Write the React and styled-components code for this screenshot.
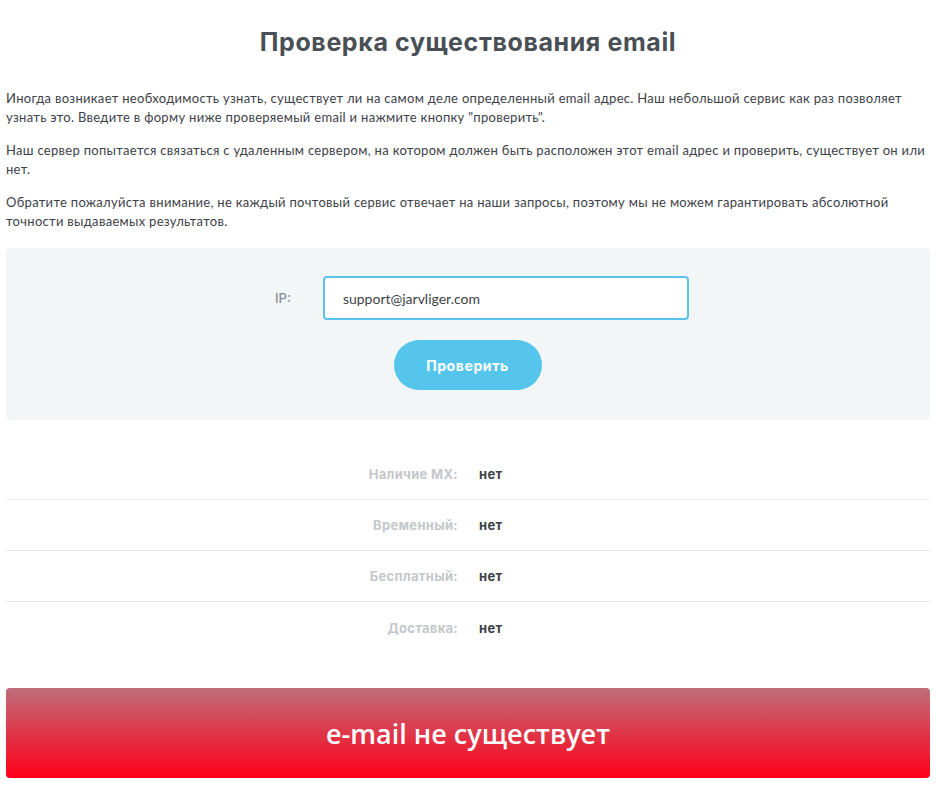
import React from "react";
import styled, { createGlobalStyle } from "styled-components";

const Global = createGlobalStyle`
  html, body { margin: 0; padding: 0; background: #fff; }
  body { font-family: Lato, "Noto Sans", sans-serif; color: #3d4148; }
  * { box-sizing: border-box; }
`;

const Page = styled.div`
  padding: 0 6px 12px 6px;
  width: 936px;
`;

const Title = styled.h1`
  margin: 0;
  padding-top: 26px;
  height: 80px;
  text-align: center;
  font-family: Inter, "Noto Sans", sans-serif;
  font-weight: 700;
  font-size: 25px;
  letter-spacing: 0.6px;
  line-height: 32px;
  color: #4a4f55;
`;

const Text = styled.p`
  margin: 0 0 14px 0;
  font-size: 13px;
  line-height: 19px;
  letter-spacing: 0.3px;
  color: #3d4148;
`;

const Intro = styled.div`
  padding-top: 9px;
  padding-bottom: 2px;
`;

const FormPanel = styled.form`
  margin-top: 1px;
  background: #f3f6f7;
  border-radius: 4px;
  padding: 28px 0 30px;
  display: flex;
  flex-direction: column;
  align-items: center;
  gap: 20px;
`;

const FieldRow = styled.div`
  display: flex;
  align-items: center;
  gap: 32px;
  margin-left: 28px;
`;

const Label = styled.label`
  font-family: Inter, sans-serif;
  font-size: 13px;
  font-weight: 500;
  color: #8a8f95;
`;

const Input = styled.input`
  width: 366px;
  height: 44px;
  border: 2px solid #5bc3ea;
  border-radius: 4px;
  background: #fff;
  padding: 0 18px;
  font-family: Lato, sans-serif;
  font-size: 14px;
  color: #3d4148;
  outline: none;
`;

const Submit = styled.button`
  width: 148px;
  height: 50px;
  border: none;
  border-radius: 25px;
  background: #55c5ec;
  color: #fff;
  font-family: Inter, sans-serif;
  font-weight: 700;
  font-size: 14px;
  letter-spacing: 0.6px;
  cursor: pointer;
  margin-left: -1px;
`;

const Results = styled.div`
  margin-top: 29px;
`;

const Row = styled.div`
  display: grid;
  grid-template-columns: 452px 1fr;
  column-gap: 21px;
  align-items: center;
  height: 51px;
  border-bottom: ${(p) => (p.$last ? "none" : "1px solid #e9eaec")};
  font-family: Inter, sans-serif;
  font-weight: 700;
  font-size: 13px;
  letter-spacing: 0.3px;
`;

const Key = styled.div`
  text-align: right;
  color: #c4c7cb;
`;

const Val = styled.div`
  color: #3d4148;
`;

const Banner = styled.div`
  margin-top: 35px;
  height: 90px;
  border-radius: 4px;
  background: linear-gradient(to bottom, #bf6e7a 0%, #ff0018 100%);
  display: flex;
  align-items: center;
  justify-content: center;
  color: #fff;
  font-family: "Open Sans", sans-serif;
  font-weight: 600;
  font-size: 27px;
`;

const rows = [
  ["Наличие MX:", "нет"],
  ["Временный:", "нет"],
  ["Бесплатный:", "нет"],
  ["Доставка:", "нет"],
];

export default function App() {
  return (
    <>
      <Global />
      <Page>
        <Title>Проверка существования email</Title>
        <Intro>
          <Text>
            Иногда возникает необходимость узнать, существует ли на самом деле определенный email адрес. Наш небольшой сервис как раз позволяет узнать это. Введите в форму ниже проверяемый email и нажмите кнопку "проверить".
          </Text>
          <Text>
            Наш сервер попытается связаться с удаленным сервером, на котором должен быть расположен этот email адрес и проверить, существует он или нет.
          </Text>
          <Text>
            Обратите пожалуйста внимание, не каждый почтовый сервис отвечает на наши запросы, поэтому мы не можем гарантировать абсолютной точности выдаваемых результатов.
          </Text>
        </Intro>
        <FormPanel onSubmit={(e) => e.preventDefault()}>
          <FieldRow>
            <Label>IP:</Label>
            <Input defaultValue="support@jarvliger.com" />
          </FieldRow>
          <Submit type="submit">Проверить</Submit>
        </FormPanel>
        <Results>
          {rows.map(([k, v], i) => (
            <Row key={k} $last={i === rows.length - 1}>
              <Key>{k}</Key>
              <Val>{v}</Val>
            </Row>
          ))}
        </Results>
        <Banner>e-mail не существует</Banner>
      </Page>
    </>
  );
}
